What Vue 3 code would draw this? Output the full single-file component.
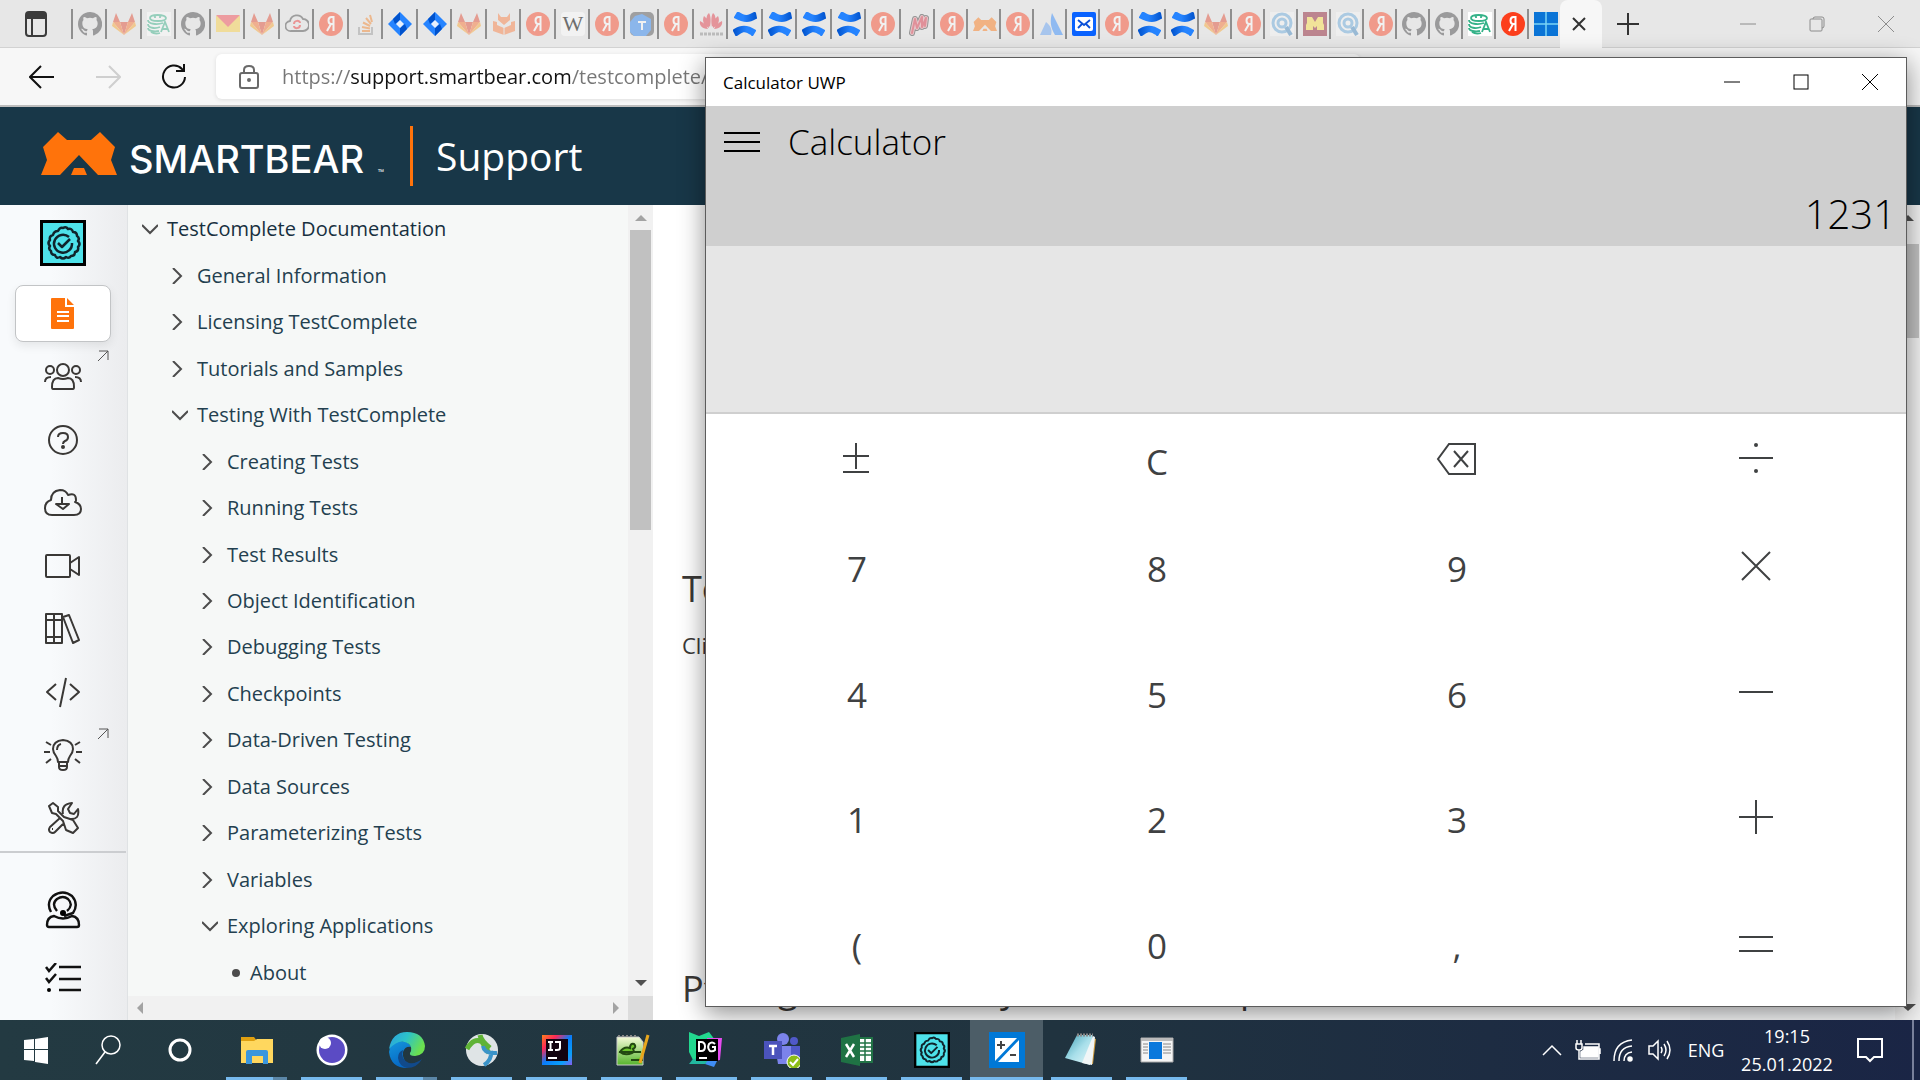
<script setup>
import { ref } from 'vue'

const tabsA = ['github', 'gitlab', 'db', 'github', 'mail', 'gitlab', 'cloud', 'ya', 'so', 'jira', 'jira', 'gitlab', 'foxbook', 'ya', 'wiki', 'ya', 'tblue', 'ya', 'huawei', 'conf', 'conf', 'conf', 'conf', 'ya', 'mscript']
const tabsB = ['ya', 'bear', 'ya', 'atlas', 'bluemail', 'ya', 'conf', 'conf', 'gitlab', 'ya', 'qsearch', 'mgold', 'qsearch', 'ya', 'github', 'github', 'db-on', 'ya-on', 'win']
const vivid = ['jira', 'conf', 'bluemail', 'db-on', 'ya-on', 'win', 'github']
const symbolOf = (n) => '#f-' + n.replace('-on', '')

const url = ref('https://support.smartbear.com/testcomplete/docs')

const tree = [
  { t: 'TestComplete Documentation', l: 0, open: true },
  { t: 'General Information', l: 1 },
  { t: 'Licensing TestComplete', l: 1 },
  { t: 'Tutorials and Samples', l: 1 },
  { t: 'Testing With TestComplete', l: 1, open: true },
  { t: 'Creating Tests', l: 2 },
  { t: 'Running Tests', l: 2 },
  { t: 'Test Results', l: 2 },
  { t: 'Object Identification', l: 2 },
  { t: 'Debugging Tests', l: 2 },
  { t: 'Checkpoints', l: 2 },
  { t: 'Data-Driven Testing', l: 2 },
  { t: 'Data Sources', l: 2 },
  { t: 'Parameterizing Tests', l: 2 },
  { t: 'Variables', l: 2 },
  { t: 'Exploring Applications', l: 2, open: true },
  { t: 'About', l: 3, leaf: true },
]

const rail = [
  { id: 'doc', label: 'Documentation', active: true },
  { id: 'people', label: 'Community', ext: true },
  { id: 'help', label: 'Help' },
  { id: 'cloud', label: 'Downloads' },
  { id: 'video', label: 'Videos' },
  { id: 'books', label: 'Library' },
  { id: 'code', label: 'Code' },
  { id: 'bulb', label: 'Ideas', ext: true },
  { id: 'tools', label: 'Tools' },
]

const keys = ['pm', 'C', 'back', 'div', '7', '8', '9', 'mul', '4', '5', '6', 'minus', '1', '2', '3', 'plus', '(', '0', ',', 'eq']
const isGlyph = (k) => k.length > 1

const apps = [
  { id: 'explorer', label: 'File Explorer', stack: true },
  { id: 'eye', label: 'Viewer' },
  { id: 'edge', label: 'Edge', stack: true },
  { id: 'cisco', label: 'AnyConnect' },
  { id: 'ij', label: 'IntelliJ' },
  { id: 'npp', label: 'Notepad++' },
  { id: 'dg', label: 'DataGrip' },
  { id: 'teams', label: 'Teams' },
  { id: 'excel', label: 'Excel' },
  { id: 'tc', label: 'TestComplete' },
  { id: 'calc', label: 'Calculator', active: true },
  { id: 'notepad', label: 'Notepad' },
  { id: 'app', label: 'Application' },
]
</script>

<template>
  <svg class="defs" aria-hidden="true">
    <defs>
      <linearGradient id="gBlue" x1="0" y1="0" x2="1" y2="0"><stop offset="0" stop-color="#0052cc" /><stop offset="0.6" stop-color="#2684ff" /></linearGradient>
      <linearGradient id="gBlueR" x1="1" y1="0" x2="0" y2="0"><stop offset="0" stop-color="#0052cc" /><stop offset="0.6" stop-color="#2684ff" /></linearGradient>
      <linearGradient id="gEdgeA" x1="0" y1="0" x2="1" y2="0.4"><stop offset="0" stop-color="#2b9de0" /><stop offset="0.5" stop-color="#2cc3c9" /><stop offset="1" stop-color="#6be04f" /></linearGradient>
      <linearGradient id="gEdgeB" x1="0" y1="0" x2="0.4" y2="1"><stop offset="0" stop-color="#1597dd" /><stop offset="1" stop-color="#0667c4" /></linearGradient>
      <linearGradient id="gIj" x1="0" y1="0" x2="1" y2="1"><stop offset="0" stop-color="#fc801d" /><stop offset="0.25" stop-color="#fe2857" /><stop offset="0.5" stop-color="#087cfa" /><stop offset="0.8" stop-color="#0aa0fa" /><stop offset="1" stop-color="#8a5cf0" /></linearGradient>
      <linearGradient id="gPad" x1="0" y1="0" x2="1" y2="1"><stop offset="0" stop-color="#3f9fb5" /><stop offset="0.5" stop-color="#a8dfea" /><stop offset="1" stop-color="#e7f8fa" /></linearGradient>
      <linearGradient id="gNpp" x1="0" y1="0" x2="0" y2="1"><stop offset="0" stop-color="#f4fbd8" /><stop offset="1" stop-color="#56b52c" /></linearGradient>
    </defs>
    <symbol id="f-github" viewBox="0 0 16 16"><path fill="#9a9a9b" d="M8 0C3.600 0 0 3.600 0 8c0 3.500 2.300 6.500 5.500 7.600.4.100.5-.2.5-.4V13.800c-2.200.5-2.700-1-2.700-1-.4-.9-.9-1.200-.9-1.200-.7-.5.1-.5.1-.5.800.1 1.200.8 1.200.8.7 1.200 1.900.9 2.300.7.1-.5.300-.9.5-1.100C4.700 11.300 2.900 10.600 2.900 7.500c0-.9.300-1.600.8-2.100-.1-.2-.4-1 .1-2.100 0 0 .7-.2 2.200.8a7.500 7.500 0 0 1 4 0c1.500-1 2.200-.8 2.200-.8.4 1.100.2 1.900.1 2.100.5.600.8 1.300.8 2.100 0 3.100-1.900 3.700-3.600 3.900.3.300.5.800.5 1.500v2.300c0 .2.1.5.600.4A8 8 0 0 0 8 0z" /></symbol>
    <symbol id="f-gitlab" viewBox="0 0 24 24"><path fill="#e2432a" d="M12 23 8 10h8z" /><path fill="#fc6d26" d="M12 23 8 10H1zM12 23l4-13h7z" /><path fill="#fca326" d="M1 10 0 14l12 9zM23 10l1 4-12 9z" /><path fill="#e2432a" d="M1 10 4 1l4 9zM23 10 20 1l-4 9z" /></symbol>
    <symbol id="f-db" viewBox="0 0 24 24"><path fill="#fff" d="M0 0h24v24H0z" /><g fill="none" stroke="#34b288" stroke-width="1.800"><path d="M3 6c0-4 15-4 16 0 0 2-3 3-8 3S3 8 3 6zM8 3v3M13 3v3M1 8c0 4 9 5 15 3M1 12c0 4 7 5 12 3M1 16c0 3 6 4 11 3M4 20c3 2 6 2 9 1M14 20l4-10 4 10M15 17h6" /></g></symbol>
    <symbol id="f-mail" viewBox="0 0 24 24"><path fill="#fccf3e" d="M0 4h24v16H0z" /><path fill="#f5424c" d="M0 3h24L12 15z" /></symbol>
    <symbol id="f-cloud" viewBox="0 0 24 24"><path fill="#e8e8e8" stroke="#444" stroke-width="1.800" d="M6 19a5 5 0 0 1-1-10 7 7 0 0 1 13-2 6 6 0 0 1 0 12z" /><path fill="none" stroke="#e33" stroke-width="2" d="M9 12c0-4 6-4 6-1M15 13c0 4-6 4-6 1" /></symbol>
    <symbol id="f-ya" viewBox="0 0 24 24"><circle cx="12" cy="12" r="12" fill="#fc3f1d" /><path fill="none" stroke="#fff" stroke-width="2" d="M14.500 19V5h-2c-4 0-4 7 0 7h2M12 12l-4 7" /></symbol>
    <symbol id="f-so" viewBox="0 0 24 24"><path fill="none" stroke="#999" stroke-width="2" d="M5 15v7h13v-7" /><path stroke="#f48024" stroke-width="2" d="M8 19h8M8 15l8 1.500M9 10.500l7 3.500M12 6l5 6M16 3l2 7" /></symbol>
    <symbol id="f-jira" viewBox="0 0 24 24"><path fill="#2684ff" d="m12 0 12 12-12 12L0 12z" /><path fill="#0052cc" d="m12 0 0 8-5 4-2-5zM12 24v-8l5-4 2 5z" /><path fill="#e8f0fb" d="m12 8 4 4-4 4-4-4z" /></symbol>
    <symbol id="f-foxbook" viewBox="0 0 24 24"><path fill="#fc7a3a" d="m6 1 3 4h6l3-4v7l-6 5-6-5zM1 9l4 1v3l7 3 7-3v-3l4-1v10l-11 4-11-4z" /><path stroke="#e7e7e7" d="M12 15v8" /></symbol>
    <symbol id="f-tblue" viewBox="0 0 24 24"><rect width="24" height="24" rx="5" fill="#4a4a4c" /><path fill="#1e7cf0" d="M0 10l5-6 7-2 9 5v11l-5 6H4l-4-4z" /><path stroke="#fff" stroke-width="2" d="M8 10h8M12 10v8" /></symbol>
    <symbol id="f-huawei" viewBox="0 0 24 24"><path fill="#e2303f" d="M11 15C6 10 7 3 10 1c2 3 2 9 1 14zM13 15c5-5 4-12 1-14-2 3-2 9-1 14zM10 16C4 13 3 8 5 4c4 3 5 8 5 12zM14 16c6-3 7-8 5-12-4 3-5 8-5 12zM9 17C3 17 0 13 1 9c4 2 6 4 8 8zM15 17c6 0 9-4 8-8-4 2-6 4-8 8z" /><path stroke="#888" stroke-width="3" stroke-dasharray="3 1" d="M1 22h23" /></symbol>
    <symbol id="f-conf" viewBox="0 0 24 24"><path fill="url(#gBlueR)" d="M1 5 4 0c1-1 2 0 2 0 5 3 7 4 11 2l4-2c1 0 2 0 2 1l1 5c0 1-1 1-1 1-7 4-12 4-22-1z" /><path fill="url(#gBlue)" d="M23 19l-3 5c-1 0-2 0-2-1-5-3-7-4-11-1l-3 2c-1 0-2 0-2-1l-2-4c0-1 0-2 1-2 8-5 14-4 22 1z" /></symbol>
    <symbol id="f-mscript" viewBox="0 0 24 24"><g fill="none" stroke-linejoin="round" stroke-linecap="round"><path stroke="#333" stroke-width="6" d="M6 21 9 7l2 9 5-11v10l4-9-1 8" /><path stroke="#e8a0a8" stroke-width="4" d="M6 21 9 7l2 9 5-11v10l4-9-1 8" /><path stroke="#d8283c" stroke-width="2" d="M6 21 9 7l2 9 5-11v10l4-9-1 8" /></g></symbol>
    <symbol id="f-bear" viewBox="0 0 76 44"><path fill="#ff730b" d="M17 1 26 9h24l9-8 15 15-4 13 6 15H57L38 24 19 44H0l6-15-4-13z" /><path fill="#ff730b" d="M33 37h10l3 7H30z" /></symbol>
    <symbol id="f-atlas" viewBox="0 0 24 24"><path fill="#2684ff" d="M13 1 24 23h-8c-5-8-5-15-3-22z" /><path fill="#5b9cf5" d="M7 10c6 5 6 9 5 13H1z" /></symbol>
    <symbol id="f-bluemail" viewBox="0 0 24 24"><rect width="24" height="24" rx="2" fill="#0a63ff" /><rect x="3" y="5" width="18" height="14" rx="2" fill="#fff" /><path fill="none" stroke="#0a50d8" stroke-width="1.800" d="m6 8 6 5 6-5M6 16l4-4M18 16l-4-4" /></symbol>
    <symbol id="f-qsearch" viewBox="0 0 24 24"><path fill="#fff" opacity=".6" d="M0 0h24v24H0z" /><circle cx="12" cy="11" r="9" fill="none" stroke="#63a8dc" stroke-width="3" /><circle cx="12" cy="11" r="4" fill="none" stroke="#63a8dc" stroke-width="3" /><path stroke="#3b84c0" stroke-width="4" d="m16 15 5 8" /></symbol>
    <symbol id="f-mgold" viewBox="0 0 24 24"><path fill="#8a1026" d="M0 0h24v24H0z" /><path fill="#ffdf3c" d="M4 5h5l3 5 3-5h5v6l1 2v5h-7v-4l-2 2-2-2v4H3v-5l1-2z" /></symbol>
    <symbol id="f-win" viewBox="0 0 24 24"><path fill="#0a74d6" d="M0 0h24v24H0z" /><path stroke="#79d4f6" stroke-width="1.500" d="M12 0v24M0 12h24" /></symbol>
    <symbol id="i-badge" viewBox="0 0 46 46"><path fill="#4ee2ea" stroke="#000" stroke-width="3" d="M1.500 1.500h43v43h-43z" /><g fill="none" stroke="#10242c" stroke-width="2.500" stroke-linejoin="round"><path d="M23 8q3-2 5 1 4-1 5 3 4 0 4 4 3 2 1 5 3 3 0 6 1 4-3 5 0 4-4 4-2 3-5 1-3 3-6 0-4 2-5-2-4 0-4-4-3-2-1-5-3-3 0-6-1-4 3-5 1-4 5-4 2-4 5-3z" /><path d="M29 17a9 9 0 1 0 3 6M18 23l4 4 8-8" /></g></symbol>
  </svg>

  <div class="desktop">
    <header class="tabstrip">
      <button class="tab-menu" aria-label="Tab actions">
        <svg width="22" height="26" viewBox="0 0 22 26"><rect x="1" y="1" width="20" height="24" rx="3" fill="none" stroke="#3b3b3b" stroke-width="2" /><path fill="#3b3b3b" d="M1 2h20v6H1z" /><path stroke="#3b3b3b" stroke-width="2" d="M7 7v18" /></svg>
      </button>
      <div class="tabs wide-tabs">
        <a v-for="(t, i) in tabsA" :key="i" href="#" class="tab" :class="{ vivid: vivid.includes(t) }" :aria-label="t">
          <span v-if="t === 'wiki'" class="wiki">W</span>
          <svg v-else width="24" height="24"><use :href="symbolOf(t)" /></svg>
        </a>
      </div>
      <div class="tabs slim-tabs">
        <a v-for="(t, i) in tabsB" :key="i" href="#" class="tab" :class="{ vivid: vivid.includes(t) }" :aria-label="t"><svg width="24" height="24"><use :href="symbolOf(t)" /></svg></a>
      </div>
      <button class="tab-active" aria-label="Close tab"><svg width="14" height="14" viewBox="0 0 14 14"><path stroke="#333" stroke-width="2" d="m1 1 12 12M13 1 1 13" /></svg></button>
      <button class="tab-new" aria-label="New tab"><svg width="22" height="22" viewBox="0 0 22 22"><path stroke="#333" stroke-width="2" d="M11 0v22M0 11h22" /></svg></button>
      <div class="window-buttons muted">
        <button aria-label="Minimize"><svg width="16" height="16" viewBox="0 0 16 16"><path d="M0 8h16" /></svg></button>
        <button aria-label="Restore"><svg width="16" height="16" viewBox="0 0 16 16"><rect x="1" y="3" width="12" height="12" rx="1" /><path d="M4 3q0-2 2-2h7q2 0 2 2v7q0 2-2 2" /></svg></button>
        <button aria-label="Close"><svg width="16" height="16" viewBox="0 0 16 16"><path d="m0 0 16 16M16 0 0 16" /></svg></button>
      </div>
    </header>

    <div class="toolbar">
      <button aria-label="Back"><svg width="26" height="24" viewBox="0 0 26 24"><path stroke="#111" d="M1 12h24M12 1 1 12l11 11" /></svg></button>
      <button aria-label="Forward"><svg width="26" height="24" viewBox="0 0 26 24"><path stroke="#cfcfcf" d="M1 12h24M14 1l11 11-11 11" /></svg></button>
      <button aria-label="Refresh"><svg width="26" height="26" viewBox="0 0 26 26"><path stroke="#111" d="M24 13a11 11 0 1 1-3-8l2 2M23 0v7h-8" /></svg></button>
      <div class="address">
        <svg width="20" height="24" viewBox="0 0 20 24"><rect x="1" y="8" width="18" height="15" rx="2" /><path d="M5 8V5q0-4 5-4t5 4v3" /><circle cx="10" cy="15" r="1" /></svg>
        <input v-model="url" aria-label="Address" />
      </div>
    </div>

    <div class="page">
      <div class="site-header">
        <svg class="logo" width="76" height="44"><use href="#f-bear" /></svg>
        <span class="wordmark">SMARTBEAR</span><span class="tm">™</span>
        <span class="rule"></span>
        <a href="#" class="support">Support</a>
      </div>
      <div class="columns">
        <nav class="rail">
          <a href="#" class="product" aria-label="TestComplete"><svg width="46" height="46"><use href="#i-badge" /></svg></a>
          <a v-for="r in rail" :key="r.id" href="#" class="rail-item" :class="{ active: r.active }" :aria-label="r.label">
            <svg v-if="r.id === 'doc'" width="24" height="32" viewBox="0 0 24 32"><path fill="#ff730b" d="M1 0h13v9h9v21q0 1-1 1H1q-1 0-1-1V1q0-1 1-1zM16 0l7 7h-7z" /><path stroke="#fff" stroke-width="2" d="M6 14h12M6 18h12M6 23h12" /></svg>
            <svg v-else class="line" width="38" height="34" viewBox="0 0 38 34">
              <template v-if="r.id === 'people'"><circle cx="19" cy="10" r="6" /><circle cx="6" cy="10" r="4" /><circle cx="32" cy="10" r="4" /><path d="M9 29q-1 0-1-2 0-9 6-9 5 2 10 0 6 0 6 9 0 2-1 2zM1 22q0-5 6-5M37 22q0-5-6-5" /></template>
              <template v-if="r.id === 'help'"><circle cx="19" cy="17" r="14" /><path stroke-width="2" d="M14 14q0-4 5-4t5 4q0 3-3 4-2 1-2 3" /><circle cx="19" cy="24" r="1" fill="#333" /></template>
              <template v-if="r.id === 'cloud'"><path d="M8 29q-7 0-7-7 0-6 6-8 0-9 9-10 6 0 8 5 8-3 8 5 0 2-1 2 6 2 6 7 0 6-7 6z" /><path stroke-width="2" d="M18 11v8M12 18h13l-6 5z" /></template>
              <template v-if="r.id === 'video'"><rect x="2" y="6" width="24" height="22" rx="1" /><path d="m26 14 9-6v18l-9-6z" /></template>
              <template v-if="r.id === 'books'"><path d="M2 2h16v29H2zM10 2v29M2 8h16M2 25h16M19 5l6-2 10 25-6 3z" /></template>
              <template v-if="r.id === 'code'"><path d="M12 9 3 17l9 8M26 9l9 8-9 8M22 3l-6 29" /></template>
              <template v-if="r.id === 'bulb'"><path d="M14 24q0-3-2-6-3-4-3-7 0-8 10-9 10 1 10 9 0 3-3 7-2 3-2 6zM15 24v5q0 3 4 3t4-3v-5M15 28h8M13 12q0-5 4-6M0 14h6M32 14h6M2 4l5 3M36 4l-5 3M2 25l5-4M36 25l-5-4" /></template>
              <template v-if="r.id === 'tools'"><path d="M5 5l4-3 5 4v4l6 6 9 3 5 8-5 5-7-3-3-9-7-7-4-1zM19 13q-2-10 9-11l-4 6 2 4 4 1 4-5q2 11-8 10M16 17 6 26q-2 3 0 5 3 2 5 0l8-8M8 28h1" /></template>
            </svg>
            <svg v-if="r.ext" class="ext" width="12" height="12" viewBox="0 0 12 12"><path d="M1 11 11 1M2 1h9v9" /></svg>
          </a>
          <div class="rail-foot">
            <a href="#" aria-label="Contact support"><svg width="36" height="38" viewBox="0 0 36 38"><g fill="none" stroke="#111" stroke-width="2.400"><path d="M6 21Q1 12 8 5q10-7 19 0 7 8 1 17l-9 3M12 20q-6-7 0-12 6-4 11 0 6 6-1 12M4 36q-2 0-2-2 0-8 7-9 9 5 18 0 7 1 7 9 0 2-2 2z" /></g><circle cx="18" cy="22" r="3" /></svg></a>
            <a href="#" aria-label="Task list"><svg width="36" height="30" viewBox="0 0 36 30"><path fill="none" stroke="#111" stroke-width="2.500" d="M14 4h22M14 16h22M14 27h22M1 4l3 4 7-8M1 15l3 4 7-8" /><circle cx="4" cy="27" r="2" /></svg></a>
          </div>
        </nav>
        <div class="tree-pane">
          <div class="tree-row">
            <div class="tree">
              <a v-for="n in tree" :key="n.t" href="#" class="node" :class="'level-' + n.l">
                <span v-if="n.leaf" class="bullet"></span>
                <svg v-else width="16" height="16" viewBox="0 0 16 16"><path :d="n.open ? 'M0 4l8 8 8-8' : 'M1 0l8 8-8 8'" /></svg>
                <span>{{ n.t }}</span>
              </a>
            </div>
            <div class="vbar">
              <svg width="12" height="8" viewBox="0 0 12 8"><path fill="#a3a3a3" d="M6 1l6 6H0z" /></svg>
              <span class="thumb"></span>
              <svg width="12" height="8" viewBox="0 0 12 8"><path fill="#505050" d="M6 7 0 1h12z" /></svg>
            </div>
          </div>
          <div class="hbar">
            <svg width="8" height="12" viewBox="0 0 8 12"><path fill="#a3a3a3" d="M1 6l6-6v12z" /></svg>
            <svg width="8" height="12" viewBox="0 0 8 12"><path fill="#a3a3a3" d="M7 6 1 0v12z" /></svg>
            <span class="corner"></span>
          </div>
        </div>
        <main class="article">
          <h2>To</h2>
          <p>Click</p>
          <h2 class="second"><span>Pf</span><span>g</span><span>y</span><span>p</span></h2>
        </main>
        <div class="side-panel"></div>
        <div class="page-bar">
          <svg width="12" height="8" viewBox="0 0 12 8"><path fill="#505050" d="M6 1l6 6H0z" /></svg>
          <span class="page-thumb"></span>
          <svg width="16" height="8" viewBox="0 0 16 8"><path fill="#505050" d="M8 7 0 0h16z" /></svg>
        </div>
      </div>
    </div>

    <footer class="taskbar">
      <button class="sys" aria-label="Start"><svg width="24" height="28" viewBox="0 0 24 28"><path fill="#fff" d="M0 4l10-1v10H0zM11 3l13-2v12H11zM0 14h10v11L0 24zM11 14h13v14l-13-2z" /></svg></button>
      <button class="sys" aria-label="Search"><svg width="26" height="30" viewBox="0 0 26 30"><g fill="none" stroke="#fff" stroke-width="1.500"><circle cx="16" cy="10" r="9" /><path d="M10 17 1 29" /></g></svg></button>
      <button class="sys" aria-label="Cortana"><svg width="24" height="28" viewBox="0 0 24 28"><circle cx="12" cy="14" r="10" fill="none" stroke="#fff" stroke-width="3" /></svg></button>
      <div class="apps">
        <button v-for="a in apps" :key="a.id" class="app" :class="{ active: a.active, stack: a.stack }" :aria-label="a.label">
          <svg width="36" height="36" viewBox="0 0 36 36">
            <template v-if="a.id === 'explorer'"><path fill="#e0a010" d="M2 5h13l3 4H2z" /><path fill="#ffd75e" d="M2 9l13 0 3-2h16v24H2z" /><path fill="#3a96dd" d="M7 32V20q0-2 2-2h18q2 0 2 2v12h-5v-8H13v8z" /></template>
            <template v-if="a.id === 'eye'"><circle cx="18" cy="18" r="15.500" fill="#fff" /><circle cx="18" cy="18" r="13" fill="#5b4bc4" /><circle cx="11" cy="11" r="6" fill="#fff" /></template>
            <template v-if="a.id === 'edge'"><path fill="url(#gEdgeB)" d="M0 20Q1 9 11 9q9 0 11 6-6-1-8 5-1 8 6 13l-2 3Q2 36 0 20z" /><path fill="#114a8b" d="M14 18q-3 9 6 13 7 1 13-4-5 9-15 9-8-2-9-10 0-6 5-8z" /><path fill="url(#gEdgeA)" d="M0 17Q3 0 18 0q16 0 18 14 0 9-10 10-6 0-5-3 3-5-1-9Q11 5 0 17z" /></template>
            <template v-if="a.id === 'cisco'"><circle cx="18" cy="18" r="16" fill="#dfe4e6" /><path fill="none" stroke="#5fb336" stroke-width="5" d="M3 17q7-12 15-7l7 11M16 3q1 6 10 13" /><path fill="none" stroke="#3a93c8" stroke-width="4" d="M33 21q-13 1-14-7M27 19q1 9-7 14" /></template>
            <template v-if="a.id === 'ij'"><path fill="url(#gIj)" d="M3 3h30v30H3z" /><path fill="#12030f" d="M7 7h22v22H7z" /><path fill="none" stroke="#fff" stroke-width="2" d="M9 10h5M11.500 10v8M9 18h5M16 10h5v6q0 2-3 2h-2M9 26h9" /></template>
            <template v-if="a.id === 'npp'"><path fill="url(#gNpp)" stroke="#ccc" d="M3 5h22l4 5v23H3z" /><path stroke="#888" stroke-width="2" stroke-dasharray="2 2" d="M4 4h20" /><path fill="#6cc52e" stroke="#234a12" stroke-width="2" d="M6 20q4-6 10-4 0-5 4-4 3 3-1 5 2 3-1 4-7 3-12-1zM5 20h22M17 28h11v-3" /><path stroke="#e8a71d" stroke-width="3" d="M34 3 26 31" /></template>
            <template v-if="a.id === 'dg'"><path fill="#22d88f" d="M0 0l10 4 10-4 6 8-8 14L4 28 0 20z" /><path fill="#e64bf0" d="M18 6h15l-2 22-10 2z" /><path fill="#3f8df5" d="M18 27h11l-4 8-9-3z" /><path fill="#22b8a0" d="M0 32l4-5h16l-4 5z" /><path fill="#000" d="M7 7h22v22H7z" /><path fill="none" stroke="#fff" stroke-width="2" d="M10 10v9h2q4 0 4-4.500T12 10zM26 12q-3-3-6 0-2 4 1 7 3 1 5-1v-3h-3M10 26h8" /></template>
            <template v-if="a.id === 'teams'"><circle cx="19" cy="7" r="6" fill="#7b83eb" /><circle cx="30" cy="9" r="4" fill="#5059c9" /><path fill="#7b83eb" d="M11 14h16v18H14z" /><path fill="#5059c9" d="M27 14h9v15h-9z" /><path fill="#4b53bc" d="M0 9h18v18H0z" /><path stroke="#fff" stroke-width="2.500" d="M5 14h8M9 14v9" /><circle cx="30" cy="30" r="7" fill="#8cbd18" stroke="#fff" /><path fill="none" stroke="#fff" stroke-width="2" d="m26 30 3 3 5-6" /></template>
            <template v-if="a.id === 'excel'"><path fill="#fff" stroke="#217346" stroke-width="2" d="M19 6h14v24H19z" /><path stroke="#217346" stroke-width="1.500" d="M20 11h12M20 15h12M20 19h12M20 23h12M26 6v24" /><path fill="#1f7244" d="M2 6l19-4v32L2 30z" /><path stroke="#fff" stroke-width="2.500" d="m7 12 8 13M15 12 7 25" /></template>
            <use v-if="a.id === 'tc'" href="#i-badge" width="36" height="36" />
            <template v-if="a.id === 'calc'"><path fill="#0078d7" d="M0 0h36v36H0z" /><path fill="#fff" d="M6 6h22L6 29zM30 8v22H9z" /><path stroke="#444" stroke-width="2" d="M8 13h8M12 9v8M21 23h6" /></template>
            <template v-if="a.id === 'notepad'"><path fill="#c9973a" d="m28 6 4 1-3 25h-3z" /><path fill="url(#gPad)" d="M13 3h16l-3 30L1 26z" /><path fill="#f1f6f7" d="m29 4 2 1-3 28-10-2z" /><path stroke="#888" stroke-width="3" stroke-dasharray="2 1" d="M13 3h16" /></template>
            <template v-if="a.id === 'app'"><path fill="#f5f5f5" stroke="#aaa" d="M2 6h32v24H2z" /><path fill="#bbb" d="M2 6h32v3H2z" /><path fill="#0a78dc" d="M10 10h13v17H10z" /><path stroke="#888" d="M4 12h5M4 15h5M4 18h5M4 21h5M24 12h8M24 15h8M24 18h8M24 21h8" /></template>
          </svg>
        </button>
      </div>
      <div class="tray">
        <button aria-label="Hidden icons"><svg width="20" height="14" viewBox="0 0 20 14"><path d="m1 12 9-9 9 9" /></svg></button>
        <button aria-label="Battery"><svg width="26" height="22" viewBox="0 0 26 22"><path fill="#fff" d="M9 8h14v10H6v-5l3-2z" /><path d="M10 5h14v15H4v-7M24 10h1v5M2 1v4M6 1v4M1 5h6v4q0 2-3 2-3 0-3-2zM4 11v3" /></svg></button>
        <button aria-label="Network"><svg width="22" height="24" viewBox="0 0 22 24"><path d="M1 23Q1 4 19 2M6 23Q6 9 19 8M11 23q0-8 8-9" /><circle cx="17" cy="21" r="2" fill="#fff" /></svg></button>
        <button aria-label="Volume"><svg width="24" height="22" viewBox="0 0 24 22"><path d="M1 7h4l5-5v18l-5-5H1zM13 8q2 3 0 6M16 5q4 6 0 12M19 2q6 9 0 18" /></svg></button>
        <button class="lang">ENG</button>
        <div class="clock"><span>19:15</span><span>25.01.2022</span></div>
        <button class="notice" aria-label="Notifications"><svg width="26" height="26" viewBox="0 0 26 26"><path stroke-width="2" d="M1 2h24v18h-8l-4 4-4-4H1z" /></svg></button>
        <span class="peek"></span>
      </div>
    </footer>

    <section class="calculator" aria-label="Calculator UWP">
      <div class="titlebar">
        <span>Calculator UWP</span>
        <div class="window-buttons">
          <button aria-label="Minimize"><svg width="16" height="16" viewBox="0 0 16 16"><path d="M0 8h16" /></svg></button>
          <button aria-label="Maximize"><svg width="16" height="16" viewBox="0 0 16 16"><rect x="1" y="1" width="14" height="14" /></svg></button>
          <button aria-label="Close"><svg width="16" height="16" viewBox="0 0 16 16"><path d="m0 0 16 16M16 0 0 16" /></svg></button>
        </div>
      </div>
      <div class="calc-head">
        <div class="calc-title">
          <button aria-label="Menu"><svg width="36" height="22" viewBox="0 0 36 22"><path stroke="#000" stroke-width="2" d="M0 2h36M0 11h36M0 20h36" /></svg></button>
          <h1>Calculator</h1>
        </div>
        <output>1231</output>
      </div>
      <div class="history"></div>
      <div class="keys">
        <button v-for="k in keys" :key="k" :class="{ digit: !isGlyph(k) }" :aria-label="k">
          <svg v-if="isGlyph(k)" width="40" height="36" viewBox="0 0 40 36">
            <path v-if="k === 'pm'" d="M7 15h26M20 2v26M7 31h26" />
            <path v-if="k === 'back'" d="M13 3h26v30H13L2 18zM18 10l14 16M32 10 18 26" />
            <g v-if="k === 'div'"><path d="M3 17h34" /><circle cx="20" cy="4" r="2" /><circle cx="20" cy="30" r="2" /></g>
            <path v-if="k === 'mul'" d="m6 4 28 28M34 4 6 32" />
            <path v-if="k === 'minus'" d="M3 18h34" />
            <path v-if="k === 'plus'" d="M3 18h34M20 1v34" />
            <path v-if="k === 'eq'" d="M3 12h34M3 26h34" />
          </svg>
          <template v-else>{{ k }}</template>
        </button>
      </div>
    </section>
  </div>
</template>

<style>
body { margin: 0; overflow: hidden; }
</style>

<style scoped>
.defs { position: absolute; width: 0; height: 0; }
* { box-sizing: border-box; }
button { border: 0; padding: 0; background: none; font: inherit; color: inherit; display: flex; align-items: center; justify-content: center; }
a { color: inherit; text-decoration: none; }
svg { display: block; flex: none; }
.desktop { position: relative; height: 100vh; display: flex; flex-direction: column; font-family: "Open Sans", "Noto Sans", sans-serif; background: #fff; overflow: hidden; }

.tabstrip { height: 48px; flex: none; display: flex; background: #e7e7e7; border-bottom: 1px solid #d2d2d2; }
.tab-menu { width: 71px; }
.tabs { display: flex; align-items: center; }
.wide-tabs { flex: 0 0 862px; }
.slim-tabs { flex: 0 0 627px; }
.tab { flex: 1; height: 30px; display: flex; align-items: center; padding-left: 5px; border-left: 2px solid #8f8f8f; }
.tab svg { opacity: .45; }
.tab.vivid svg { opacity: 1; }
.wiki { width: 24px; height: 24px; border-radius: 4px; background: #f2f2f2; color: #6e6e6e; font: 22px/24px "Liberation Serif", serif; text-align: center; }
.tab-active { width: 42px; background: #f7f7f7; border-radius: 8px 8px 0 0; height: 48px; padding-right: 4px; }
.tab-new { width: 52px; }
.window-buttons { display: flex; margin-left: auto; }
.window-buttons button { width: 69px; }
.window-buttons svg { fill: none; stroke: #000; stroke-width: 1; overflow: visible; }
.window-buttons.muted svg { stroke: #8c8c8c; }

.toolbar { height: 59px; flex: none; display: flex; align-items: center; background: #f7f7f7; border-bottom: 2px solid #bdbdbd; padding-left: 9px; }
.toolbar button { width: 66px; }
.toolbar button svg { fill: none; stroke-width: 2; }
.address { flex: none; width: 1144px; height: 45px; margin-left: 9px; background: #fff; border-radius: 6px; box-shadow: 0 1px 4px #ddd; display: flex; align-items: center; padding: 0 23px; gap: 23px; }
.address svg { fill: none; stroke: #6a6a6a; stroke-width: 2; }
.address input { flex: 1; border: 0; outline: 0; padding: 0; height: 32px; font: 20px/32px "Open Sans", "Noto Sans", sans-serif; color: transparent; background: linear-gradient(90deg, #767676 68px, #111 68px, #111 289px, #767676 289px); background-clip: text; -webkit-background-clip: text; }

.page { flex: 1; min-height: 0; display: flex; flex-direction: column; }
.site-header { height: 98px; flex: none; display: flex; align-items: center; background: #183748; color: #fff; padding-left: 41px; }
.logo { margin-bottom: 6px; }
.wordmark { font: 500 38px/44px Inter, sans-serif; margin-left: 12px; padding-top: 6px; width: 249px; }
.tm { font-size: 8px; align-self: flex-end; padding-bottom: 28px; width: 32px; }
.rule { width: 3px; height: 60px; background: #ff730b; }
.support { font-size: 39px; line-height: 50px; margin-left: 23px; }
.columns { flex: 1; min-height: 0; display: flex; }

.rail { width: 128px; flex: none; display: flex; flex-direction: column; align-items: center; background: linear-gradient(90deg, #f8fafc 40%, #ebecee); border-right: 1px solid #dfe2e4; padding-right: 1px; }
.product { height: 77px; padding-top: 15px; }
.rail-item { position: relative; width: 96px; height: 63px; flex: none; display: flex; align-items: center; justify-content: center; }
.rail-item.active { height: 57px; margin: 3px 0; background: #fff; border: 1px solid #c2c4c6; border-radius: 8px; box-shadow: 0 4px 10px rgba(0, 0, 0, .08); }
.line { fill: none; stroke: #3a3836; stroke-width: 2; stroke-linejoin: round; }
.ext { position: absolute; right: 2px; top: 5px; fill: none; stroke: #555; }
.rail-foot { width: 100%; flex: 1; margin-top: 2px; border-top: 2px solid #cbcdd0; display: flex; flex-direction: column; align-items: center; gap: 34px; padding-top: 38px; }

.tree-pane { width: 525px; flex: none; display: flex; flex-direction: column; background: #f6f8f7; }
.tree-row { flex: 1; min-height: 0; display: flex; }
.tree { flex: 1; display: grid; grid-auto-rows: 1fr; padding-top: 1px; color: #23404f; font-size: 20px; line-height: 28px; white-space: nowrap; }
.node { display: flex; align-items: center; gap: 9px; min-height: 0; }
.node svg { fill: none; stroke: #4c4c4c; stroke-width: 2; }
.level-0 { padding-left: 14px; color: #183040; }
.level-1 { padding-left: 44px; }
.level-2 { padding-left: 74px; }
.level-3 { padding-left: 104px; gap: 10px; }
.bullet { width: 8px; height: 8px; border-radius: 50%; background: #4c4c4c; }
.vbar { width: 25px; background: #f1f1f1; display: flex; flex-direction: column; align-items: center; padding: 9px 0; }
.thumb { width: 21px; height: 300px; background: #c1c1c1; margin: 8px 0 auto; }
.hbar { height: 24px; flex: none; background: #f1f1f1; display: flex; align-items: center; justify-content: space-between; padding-left: 8px; }
.hbar svg + svg { margin-left: auto; margin-right: 8px; }
.corner { width: 25px; height: 24px; background: #dcdcdc; }

.article { flex: 1; min-width: 0; padding: 356px 0 0 29px; color: #3a3836; }
.article h2 { margin: 0; font-weight: 500; font-size: 36px; line-height: 56px; }
.article p { margin: 12px 0 0; font-size: 22px; line-height: 32px; }
.article h2.second { margin-top: 300px; display: flex; }
.second span:nth-child(1) { width: 96px; }
.second span:nth-child(2) { width: 222px; }
.second span:nth-child(3) { width: 240px; }
.side-panel { width: 205px; flex: none; background: #f8f9fa; }
.page-bar { width: 25px; flex: none; background: #f1f1f1; display: flex; flex-direction: column; align-items: center; padding: 9px 0 8px; }
.page-thumb { width: 22px; height: 94px; margin: 22px 0 auto; background: #c1c1c1; }

.taskbar { height: 60px; flex: none; display: flex; background: linear-gradient(90deg, #233a42, #20333f 55%, #1a2545); color: #fff; font-size: 18px; position: relative; z-index: 2; }
.sys { width: 72px; }
.apps { display: flex; padding-left: 3px; }
.app { width: 75px; height: 60px; position: relative; }
.app.active { background: linear-gradient(#4c5d67, #4c5d67) 1px 0 / 73px 60px no-repeat; }
.app::after { content: ""; position: absolute; bottom: 0; left: 7px; right: 7px; height: 3px; background: #76b9ed; }
.app.active::after { left: 1px; right: 1px; }
.app.stack::after { background: linear-gradient(90deg, #76b9ed 47px, #5b87a8 47px); }
.tray { margin-left: auto; display: flex; align-items: center; }
.tray svg { fill: none; stroke: #fff; stroke-width: 1.500; }
.tray button { width: 36px; }
.tray .lang { width: 44px; margin-left: 6px; }
.clock { width: 118px; display: flex; flex-direction: column; align-items: center; line-height: 28px; }
.tray .notice { width: 48px; }
.peek { width: 2px; height: 60px; background: #78809a; margin: 0 6px 0 18px; }

.calculator { position: absolute; z-index: 1; left: 705px; right: 13px; top: 57px; bottom: 73px; display: flex; flex-direction: column; background: #fff; border: 1px solid #5c5c5c; box-shadow: 0 6px 24px rgba(0, 0, 0, .45); color: #000; }
.titlebar { height: 48px; flex: none; display: flex; align-items: center; padding: 0 2px 0 17px; font-size: 17px; }
.titlebar .window-buttons { height: 48px; }
.calc-head { height: 140px; flex: none; background: #cfcfcf; display: flex; flex-direction: column; justify-content: space-between; }
.calc-title { display: flex; align-items: center; gap: 28px; padding: 12px 0 0 18px; }
.calc-title h1 { margin: 0; font-weight: 300; font-size: 35px; line-height: 48px; }
.calc-head output { align-self: flex-end; font-weight: 300; font-size: 40px; line-height: 60px; padding: 0 10px 2px 0; }
.history { height: 168px; flex: none; background: #e6e6e6; border-bottom: 2px solid #cfcfcf; }
.keys { flex: 1; display: grid; grid-template-columns: repeat(4, 1fr); grid-template-rows: 89px repeat(4, 1fr); color: #3f4142; font-size: 35px; }
.keys button { min-height: 0; }
.keys .digit { padding: 5px 0 0 2px; }
.keys svg { fill: none; stroke: #3f4142; stroke-width: 2; }
.keys circle { fill: #3f4142; stroke: none; }
</style>
